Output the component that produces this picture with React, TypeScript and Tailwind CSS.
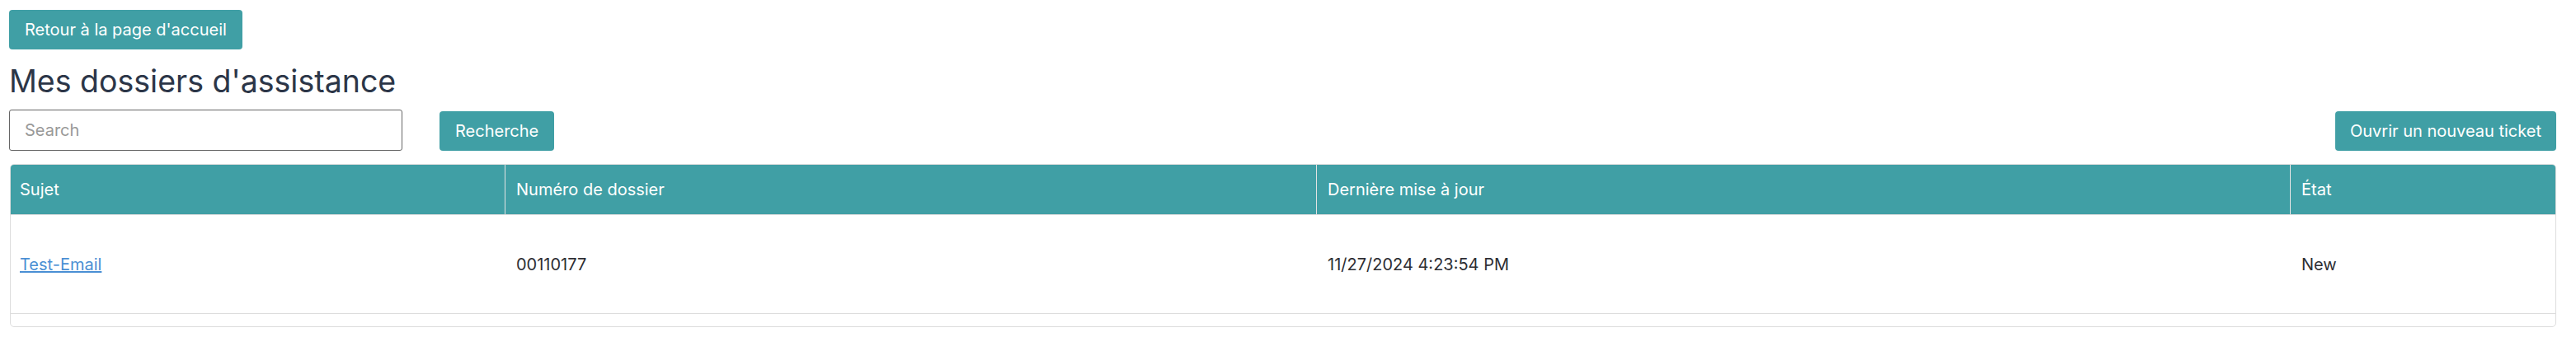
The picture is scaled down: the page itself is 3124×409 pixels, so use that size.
import React from 'react';

const COLUMNS = ['Sujet', 'Numéro de dossier', 'Dernière mise à jour', 'État'];

const CASES = [
  { subject: 'Test-Email', number: '00110177', updated: '11/27/2024 4:23:54 PM', status: 'New' },
];

const grid = 'grid grid-cols-[599px_984px_1181px_1fr]';

export default function App() {
  return (
    <div className="min-h-screen bg-white pl-[11px] pr-[24px] pt-[12px] font-['Inter','Liberation_Sans',sans-serif] text-[#333]">
      <button className="h-[48px] px-[19px] rounded-[4px] bg-[#409fa5] text-white text-[20px]">
        Retour à la page d'accueil
      </button>

      <h1 className="mt-[17px] text-[37.5px] leading-[44px] font-normal text-[#2c3648]">Mes dossiers d'assistance</h1>

      <div className="mt-[12px] flex items-end">
        <input
          type="text"
          placeholder="Search"
          className="w-[477px] h-[50px] px-[18px] border border-[#666] rounded-[3px] text-[20px] placeholder:text-[#999] outline-none"
        />
        <button className="ml-[45px] h-[48px] px-[19px] rounded-[4px] bg-[#409fa5] text-white text-[20px]">
          Recherche
        </button>
        <button className="ml-auto h-[48px] px-[18px] rounded-[4px] bg-[#409fa5] text-white text-[20px]">
          Ouvrir un nouveau ticket
        </button>
      </div>

      <div className="mt-[16px] ml-[1px] border border-[#ddd] rounded-[5px] overflow-hidden">
        <div className={`${grid} h-[61px] bg-[#409fa5] text-white text-[20px] border-b border-[#ddd]`}>
          {COLUMNS.map((c, i) => (
            <div key={c} className={`flex items-center px-[11px] ${i > 0 ? 'border-l border-[#e4e4e4] pl-[13px]' : ''}`}>
              {c}
            </div>
          ))}
        </div>
        {CASES.map(row => (
          <div key={row.number} className={`${grid} h-[120px] text-[20px] text-[#2e2e33] border-b border-[#ddd]`}>
            <div className="flex items-center px-[11px]">
              <a href="#" className="text-[#4a8fd4] underline">{row.subject}</a>
            </div>
            <div className="flex items-center pl-[14px]">{row.number}</div>
            <div className="flex items-center pl-[14px]">{row.updated}</div>
            <div className="flex items-center pl-[14px]">{row.status}</div>
          </div>
        ))}
        <div className="h-[15px]" />
      </div>
    </div>
  );
}
